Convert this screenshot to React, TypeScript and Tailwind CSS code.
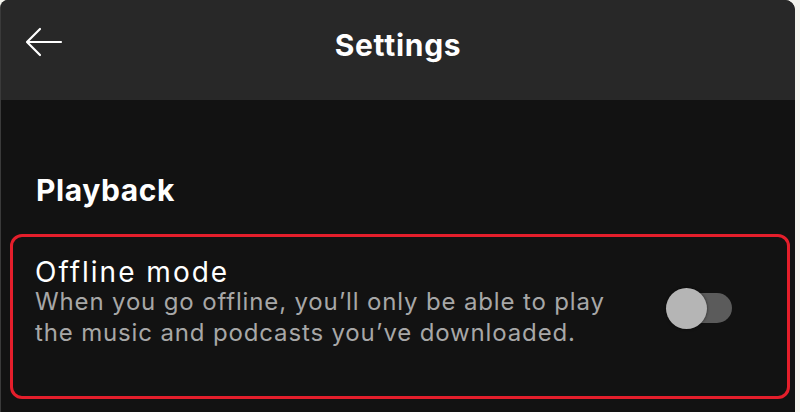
function BackArrow() {
  return (
    <svg width="38" height="30" viewBox="0 0 38 30" fill="none" className="absolute left-[24px] top-[27px]">
      <path d="M36 15H2.5M15 2L2 15l13 13" stroke="white" strokeWidth="2.2" strokeLinecap="round" strokeLinejoin="round" />
    </svg>
  )
}

function Toggle() {
  return (
    <div className="relative mt-[31px] h-[42px] w-[66px] shrink-0">
      <div className="absolute left-[20px] top-[6px] h-[30px] w-[46px] rounded-full bg-[#5b5b5b]" />
      <div className="absolute left-0 top-px h-[41px] w-[41px] rounded-full bg-[#b5b5b5] shadow-[0_0_3px_rgba(0,0,0,0.6)]" />
    </div>
  )
}

export default function App() {
  return (
    <div className="h-[412px] w-[800px] bg-[#f4f4ee] font-['Inter',sans-serif]">
      <div className="flex h-full w-[795px] flex-col overflow-hidden rounded-tl-[8px] rounded-tr-[10px] border-l border-[#3a3a3a] bg-[#121212]">
        {/* header */}
        <header className="relative flex h-[100px] shrink-0 justify-center bg-[#282828] pt-[26px]">
          <BackArrow />
          <h1 className="text-[30px] font-bold leading-[38px] tracking-[0.7px] text-white">Settings</h1>
        </header>

        <main className="pl-[9px] pr-[5px]">
          <h2 className="mt-[71px] pl-[26px] text-[30px] font-bold leading-[38px] tracking-[0.6px] text-white">Playback</h2>

          <section className="mt-[25px] flex h-[165px] items-start justify-between rounded-[12px] border-[3px] border-[#e41e2b] pl-[22px] pr-[55px] pt-[19px]">
            <div>
              <p className="text-[28px] leading-[32px] tracking-[2px] text-white">Offline mode</p>
              <p className="-mt-[2px] text-[24px] leading-[31px] tracking-[0.85px] text-[#a7a7a7]">
                When you go offline, you’ll only be able to play
                <br />
                the music and podcasts you’ve downloaded.
              </p>
            </div>
            <Toggle />
          </section>
        </main>
      </div>
    </div>
  )
}
